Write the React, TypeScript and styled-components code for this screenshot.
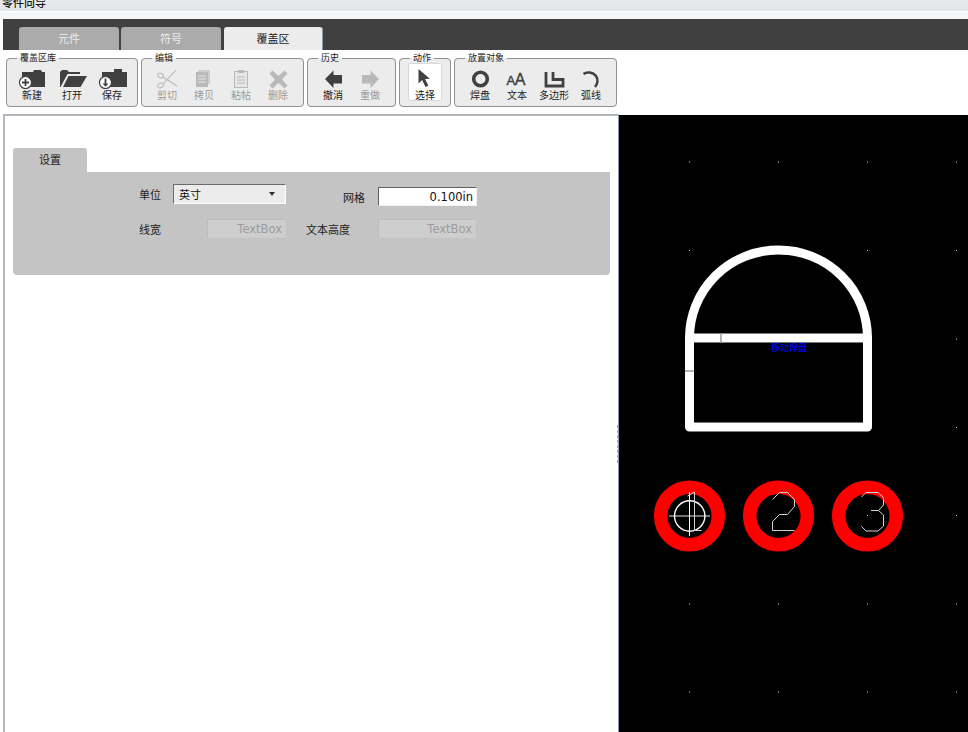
import React from 'react';
import styled, { createGlobalStyle } from 'styled-components';

const cjk = '"Noto Sans CJK SC", "Noto Sans", sans-serif';

const Global = createGlobalStyle`
  html, body { margin: 0; padding: 0; background: #fff; overflow: hidden; }
  #root { width: 968px; height: 732px; }
`;

const Page = styled.div`
  width: 968px;
  height: 732px;
  display: flex;
  flex-direction: column;
  font-family: ${cjk};
  overflow: hidden;
`;

const TitleBar = styled.div`
  height: 11px;
  flex: none;
  overflow: hidden;
  background: linear-gradient(#e9ebed, #e1e4e7);
  padding-left: 2px;
`;

const TitleText = styled.div`
  margin-top: -5px;
  font-size: 11px;
  line-height: 14px;
  font-weight: 500;
  color: #111;
`;

const TitleGap = styled.div`
  height: 8px;
  flex: none;
  background: linear-gradient(#ffffff 0, #ffffff 1px, #f2f4f6 2px, #f6f8f9 100%);
`;

const TabBar = styled.div`
  height: 31px;
  flex: none;
  margin-left: 3px;
  background: #404040;
  display: flex;
  align-items: flex-end;
  padding-left: 16px;
  gap: 2px;
`;

const Tab = styled.div<{ $active?: boolean; $w: number }>`
  width: ${p => p.$w}px;
  height: 23px;
  box-sizing: border-box;
  margin-left: ${p => (p.$active ? 1 : 0)}px;
  border-radius: 3px 3px 0 0;
  background: ${p => (p.$active ? '#ececec' : '#ababab')};
  border-right: ${p => (p.$active ? '1px solid #8f9bab' : 'none')};
  color: ${p => (p.$active ? '#222' : '#ececec')};
  font-size: 11px;
  line-height: 22px;
  text-align: center;
`;

const Toolbar = styled.div`
  height: 64px;
  flex: none;
  box-sizing: border-box;
  padding: 3px 0 0 6px;
  display: flex;
  align-items: flex-start;
  gap: 3px;
  background: #fff;
`;

const Group = styled.fieldset<{ $w: number }>`
  width: ${p => p.$w}px;
  height: 54px;
  box-sizing: border-box;
  margin: 0;
  padding: 0;
  border: 1px solid #929292;
  border-radius: 4px;
  background: #ececec;
  display: flex;
  justify-content: center;
  align-items: flex-start;
`;

const GroupTitle = styled.legend`
  margin-left: 10px;
  padding: 0 3px;
  height: 10px;
  font-size: 9px;
  line-height: 10px;
  color: #222;
`;

const ToolButton = styled.div<{ $w: number; $disabled?: boolean; $selected?: boolean }>`
  width: ${p => p.$w}px;
  height: 38px;
  box-sizing: border-box;
  padding-top: 4px;
  display: flex;
  flex-direction: column;
  align-items: center;
  border-radius: 2px;
  background: ${p => (p.$selected ? '#fff' : 'transparent')};
  box-shadow: ${p => (p.$selected ? 'inset 0 0 0 1px #d8d8d8' : 'none')};
  color: ${p => (p.$disabled ? '#9a9a9a' : '#222')};
  font-size: 10px;
  line-height: 12px;
`;

const ToolIcon = styled.svg`
  display: block;
  flex: none;
`;

const Main = styled.div`
  flex: 1;
  display: flex;
  min-height: 0;
`;

const LeftPane = styled.div`
  position: relative;
  width: 616px;
  margin-left: 3px;
  flex: none;
  box-sizing: border-box;
  border-top: 2px solid #b2b6ba;
  border-left: 2px solid #b4bac0;
  border-right: 1px solid #8a95ad;
  background: #fff;
  padding: 32px 8px 0 8px;
`;

const SplitHandle = styled.div`
  position: absolute;
  right: 0;
  top: 309px;
  height: 38px;
  width: 1px;
  border-right: 1px dashed #aab0bb;
`;

const SettingsTab = styled.div`
  width: 74px;
  height: 24px;
  border-radius: 3px 3px 0 0;
  background: #c4c4c4;
  color: #222;
  font-size: 11px;
  line-height: 23px;
  text-align: center;
`;

const SettingsPanel = styled.div`
  width: 597px;
  height: 103px;
  box-sizing: border-box;
  background: #c4c4c4;
  border-radius: 0 0 4px 4px;
  padding: 12px 0 0 126px;
`;

const Row = styled.div<{ $gap?: number }>`
  display: flex;
  align-items: flex-start;
  margin-top: ${p => p.$gap ?? 0}px;
`;

const Label = styled.div<{ $w: number; $ml?: number; $mt?: number }>`
  width: ${p => p.$w}px;
  margin-left: ${p => p.$ml ?? 0}px;
  margin-top: ${p => p.$mt ?? 0}px;
  height: 20px;
  line-height: 21px;
  font-size: 11px;
  color: #222;
`;

const SelectBox = styled.div`
  width: 113px;
  height: 20px;
  box-sizing: border-box;
  display: flex;
  align-items: center;
  justify-content: space-between;
  padding: 0 10px 0 5px;
  background: #ececec;
  border-top: 1px solid #6b6b6b;
  border-left: 1px solid #6b6b6b;
  border-right: 1px solid #fff;
  border-bottom: 1px solid #fff;
  font-size: 11px;
  color: #111;
`;

const Caret = styled.span`
  width: 0;
  height: 0;
  border-left: 3px solid transparent;
  border-right: 3px solid transparent;
  border-top: 4px solid #333;
`;

const TextField = styled.div<{ $w: number; $disabled?: boolean; $mt?: number }>`
  width: ${p => p.$w}px;
  height: 19px;
  margin-top: ${p => p.$mt ?? 0}px;
  box-sizing: border-box;
  padding-right: 3px;
  text-align: right;
  font-family: "DejaVu Sans", sans-serif;
  font-size: 11.5px;
  line-height: 19px;
  background: ${p => (p.$disabled ? '#cecece' : '#fff')};
  color: ${p => (p.$disabled ? '#9c9c9c' : '#111')};
  border-style: solid;
  border-width: 1px;
  border-color: ${p => (p.$disabled ? '#bcbcbc #cbcbcb #cbcbcb #bcbcbc' : '#5f5f5f #f4f4f4 #f4f4f4 #5f5f5f')};
`;

const Board = styled.svg`
  display: block;
  flex: none;
  margin-top: 1px;
  background: #000;
`;

const DARK = '#404040';
const OFF = '#b9b9b9';

const icons: Record<string, React.ReactNode> = {
  new: (
    <g>
      <path d="M10 5h11l1-2h7l1 2h3v15H10z" fill={DARK} />
      <circle cx="13.5" cy="15.5" r="6" fill="#fff" stroke={DARK} strokeWidth="1.2" />
      <path d="M10 15.5h7M13.5 12v7" stroke={DARK} strokeWidth="1.8" />
    </g>
  ),
  open: (
    <g fill={DARK}>
      <path d="M8 20V5l2-2h5l2 2h11v2H15.5L8.5 20z" />
      <path d="M11 20l5.5-11H35l-6.5 11z" />
    </g>
  ),
  save: (
    <g>
      <path d="M10 5h12V2h8v3h5v15H10z" fill={DARK} />
      <circle cx="13.5" cy="15.5" r="6" fill="#fff" stroke={DARK} strokeWidth="1.2" />
      <path d="M13.5 11.5v6" stroke={DARK} strokeWidth="1.8" />
      <path d="M10.5 16.5h6l-3 3.2z" fill={DARK} />
    </g>
  ),
  cut: (
    <g fill="none" stroke={OFF} strokeWidth="1.1">
      <ellipse cx="11.5" cy="8.5" rx="3" ry="2.2" transform="rotate(25 11.5 8.5)" />
      <ellipse cx="11.5" cy="18.5" rx="3" ry="2.2" transform="rotate(-25 11.5 18.5)" />
      <path d="M14 10l14 9M14 17L27 3" />
    </g>
  ),
  copy: (
    <g>
      <rect x="12" y="3" width="12" height="14" fill="#cfcfcf" />
      <rect x="10" y="5" width="12" height="15" fill={OFF} />
      <path d="M12 9h8M12 12h8M12 15h8" stroke="#e6e6e6" strokeWidth="1" />
    </g>
  ),
  paste: (
    <g>
      <rect x="11.5" y="4.5" width="13" height="16" fill="#e6e6e6" stroke={OFF} />
      <rect x="15" y="3" width="6" height="3" fill={OFF} />
      <path d="M14 10h8M14 13h8M14 16h8" stroke={OFF} strokeWidth="1" />
    </g>
  ),
  remove: <path d="M9.5 6.5l3-3 6 5.5 6-5.5 3 3-5.5 6 5.5 6-3 3-6-5.5-6 5.5-3-3 5.5-6z" fill={OFF} />,
  undo: <path d="M10 12l8.5-8.5V8H27v8.5h-8.5V21z" fill={DARK} />,
  redo: <path d="M27 12l-8.5-8.5V8H10v8.5h8.5V21z" fill={OFF} />,
  select: <path d="M10.5 2v14.5l3.6-3.4 3.4 7 2.9-1.3-3.4-6.8 4.8-.3z" fill={DARK} />,
  pad: <circle cx="18.5" cy="12" r="6.8" fill="none" stroke={DARK} strokeWidth="3.6" />,
  text: (
    <text y="18" x="7.5" fontFamily='"Liberation Sans", sans-serif' fill={DARK} stroke={DARK} strokeWidth="0.4">
      <tspan fontSize="13">A</tspan>
      <tspan fontSize="16" dx="-0.5">A</tspan>
    </text>
  ),
  poly: <path d="M10 5V19H27V12.5H17V5" fill="none" stroke={DARK} strokeWidth="2.8" />,
  arc: <path d="M10.5 7C14 4.5 20 5 23 9C25.5 12.5 24.5 17 22 20" fill="none" stroke={DARK} strokeWidth="2.6" />,
};

type Tool = { icon: string; label: string; disabled?: boolean; selected?: boolean };

const groups: { title: string; width: number; buttonWidth: number; tools: Tool[] }[] = [
  {
    title: '覆盖区库', width: 132, buttonWidth: 40,
    tools: [{ icon: 'new', label: '新建' }, { icon: 'open', label: '打开' }, { icon: 'save', label: '保存' }],
  },
  {
    title: '编辑', width: 163, buttonWidth: 37,
    tools: [
      { icon: 'cut', label: '剪切', disabled: true },
      { icon: 'copy', label: '拷贝', disabled: true },
      { icon: 'paste', label: '粘帖', disabled: true },
      { icon: 'remove', label: '删除', disabled: true },
    ],
  },
  {
    title: '历史', width: 89, buttonWidth: 37,
    tools: [{ icon: 'undo', label: '撤消' }, { icon: 'redo', label: '重做', disabled: true }],
  },
  {
    title: '动作', width: 52, buttonWidth: 34,
    tools: [{ icon: 'select', label: '选择', selected: true }],
  },
  {
    title: '放置对象', width: 163, buttonWidth: 37,
    tools: [
      { icon: 'pad', label: '焊盘' },
      { icon: 'text', label: '文本' },
      { icon: 'poly', label: '多边形' },
      { icon: 'arc', label: '弧线' },
    ],
  },
];

const gridX = [689.5, 778.5, 867.5, 956.5];
const gridY = [162, 250.5, 339, 427.5, 515.5, 604, 692];
const padX = [689.5, 778.5, 867.5];

export default function App() {
  return (
    <Page>
      <Global />
      <TitleBar><TitleText>零件向导</TitleText></TitleBar>
      <TitleGap />
      <TabBar>
        <Tab $w={100}>元件</Tab>
        <Tab $w={100}>符号</Tab>
        <Tab $w={99} $active>覆盖区</Tab>
      </TabBar>
      <Toolbar>
        {groups.map(g => (
          <Group key={g.title} $w={g.width}>
            <GroupTitle>{g.title}</GroupTitle>
            {g.tools.map(t => (
              <ToolButton key={t.label} $w={g.buttonWidth} $disabled={t.disabled} $selected={t.selected}>
                <ToolIcon width={g.buttonWidth} height={22} viewBox={`0 0 ${g.buttonWidth} 22`}>
                  {icons[t.icon]}
                </ToolIcon>
                {t.label}
              </ToolButton>
            ))}
          </Group>
        ))}
      </Toolbar>
      <Main>
        <LeftPane>
          <SettingsTab>设置</SettingsTab>
          <SettingsPanel>
            <Row>
              <Label $w={34}>单位</Label>
              <SelectBox>英寸<Caret /></SelectBox>
              <Label $w={35} $ml={57} $mt={3}>网格</Label>
              <TextField $w={99} $mt={3}>0.100in</TextField>
            </Row>
            <Row $gap={12}>
              <Label $w={68}>线宽</Label>
              <TextField $w={79} $disabled>TextBox</TextField>
              <Label $w={72} $ml={20}>文本高度</Label>
              <TextField $w={98} $disabled>TextBox</TextField>
            </Row>
          </SettingsPanel>
          <SplitHandle />
        </LeftPane>
        <Board width={349} height={617} viewBox="619 115 349 617">
          {gridX.flatMap(x => gridY.map(y => (
            <rect key={`${x}-${y}`} x={x - 0.5} y={y - 0.5} width={1} height={1} fill="#d8d8d8" />
          )))}
          <g fill="none" stroke="#fff" strokeWidth="9" strokeLinejoin="round" strokeLinecap="round">
            <path d="M689.5 338A89 88 0 0 1 867.5 338V427H689.5Z" />
            <path d="M689.5 338H867.5" />
          </g>
          <path d="M694 342.5H863M694 422.5H863" stroke="#777" strokeWidth="1" />
          <path d="M721 333V343M685 371H694" stroke="#999" strokeWidth="1.5" />
          <text x="771" y="351" fontSize="9" fontWeight="500" fill="#0000ff" fontFamily={cjk}>移动焊盘</text>
          {padX.map(x => (
            <circle key={x} cx={x} cy={516} r={28.8} fill="none" stroke="#ff0000" strokeWidth={13.5} />
          ))}
          <path d="M669 516H710" stroke="#999" strokeWidth="1.4" />
          <circle cx="689.7" cy="516" r="15.2" fill="none" stroke="#fff" strokeWidth="1.4" />
          <path d="M689.5 492V536" stroke="#fff" strokeWidth="1" />
          <g fill="none" stroke="#d2d2d2" strokeWidth="1">
            <path d="M687.5 496L694.5 492V530.5H701.5" />
            <path d="M772.5 499.5L779.5 492.5H787.5L794.5 499.5V506.5L787.5 514.5H779.5L772.5 521.5V530.5H794.5" />
            <path d="M861.5 497L866 492.5H878L883.5 497.5V505L878.5 510.5L883.5 515V526L878 531H866L861.5 526.5M871 510.5H878.5" />
          </g>
        </Board>
      </Main>
    </Page>
  );
}
